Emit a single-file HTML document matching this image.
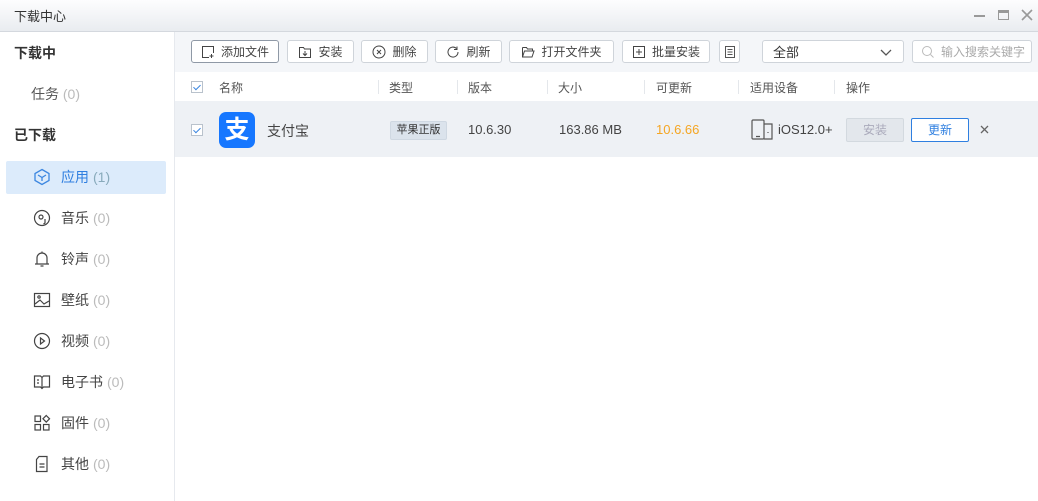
<!DOCTYPE html>
<html><head><meta charset="utf-8"><style>
*{margin:0;padding:0;box-sizing:border-box}
body{width:1038px;height:501px;overflow:hidden;background:#fff;font-family:"Liberation Sans","Noto Sans CJK SC",sans-serif;font-size:13px;color:#333;position:relative}
.abs{position:absolute}
.title{left:0;top:0;width:1038px;height:32px;background:linear-gradient(#fdfdfe,#e9ecf0);border-bottom:1px solid #d4d8de}
.side{left:0;top:32px;width:175px;height:469px;border-right:1px solid #e6e9ee;background:#fff}
.tb{left:175px;top:32px;width:863px;height:40px;background:#f4f6f9}
.btn{position:absolute;top:40px;height:23px;border:1px solid #cfd4da;border-radius:3px;background:#fff;font-size:12px;color:#444;display:flex;align-items:center;justify-content:center;gap:6px}
.btn svg{width:14px;height:14px}
.hdr{left:175px;top:72px;width:863px;height:29px;background:#fff;font-size:12px;color:#555}
.row{left:175px;top:101px;width:863px;height:56px;background:#eef1f5}
.sep{position:absolute;top:80px;width:1px;height:14px;background:#e4e7eb}
.cb{position:absolute;width:12px;height:12px;border:1px solid #b9c2cc;background:#fff}
.cb:after{content:"";position:absolute;left:3px;top:1px;width:3px;height:6px;border:solid #3b86e0;border-width:0 1.5px 1.5px 0;transform:rotate(45deg)}
.it{position:absolute;left:33px;font-size:14px;color:#444;display:flex;align-items:center;gap:10px}
.it span{color:#bbb}
.it svg{width:18px;height:18px}
</style></head><body>
<div class="abs title"></div>
<div class="abs" style="left:14px;top:6px;font-size:13px;color:#333">下载中心</div>
<div class="abs" style="left:974px;top:15px;width:11px;height:2px;background:#999"></div>
<div class="abs" style="left:998px;top:10px;width:11px;height:10px;border:1.5px solid #999;border-top-width:3px"></div>
<svg class="abs" style="left:1021px;top:9px" width="12" height="12" viewBox="0 0 12 12" stroke="#999" stroke-width="1.6"><path d="M1 1l10 10M11 1L1 11"/></svg>

<div class="abs side"></div>
<div class="abs" style="left:14px;top:43px;font-size:14px;font-weight:bold;color:#333">下载中</div>
<div class="abs" style="left:31px;top:84px;font-size:14px;color:#555">任务 <span style="color:#bbb">(0)</span></div>
<div class="abs" style="left:14px;top:125px;font-size:14px;font-weight:bold;color:#333">已下载</div>
<div class="abs" style="left:6px;top:161px;width:160px;height:33px;background:#dcebfb;border-radius:2px"></div>
<div class="it" style="top:167px;color:#2f7fe0"><svg viewBox="0 0 18 18" fill="none" stroke="#3b86e0" stroke-width="1.3"><path d="M9 1.5L16 5.5V12.5L9 16.5L2 12.5V5.5Z M5 7L9 9.5L13 7 M9 9.5V13"/></svg>应用 <span style="color:#8ab;margin-left:-6px">(1)</span></div>
<div class="it" style="top:208px"><svg viewBox="0 0 18 18" fill="none" stroke="#444" stroke-width="1.2"><circle cx="9" cy="9" r="7.5"/><circle cx="8" cy="8" r="2"/><path d="M12 10v4l-1.5 1"/></svg>音乐 <span style="margin-left:-6px">(0)</span></div>
<div class="it" style="top:249px"><svg viewBox="0 0 18 18" fill="none" stroke="#444" stroke-width="1.2"><path d="M4 14V8a5 5 0 0 1 10 0v6 M2 14h14 M7.5 16h3 M9 1.5v1.5"/></svg>铃声 <span style="margin-left:-6px">(0)</span></div>
<div class="it" style="top:290px"><svg viewBox="0 0 18 18" fill="none" stroke="#444" stroke-width="1.2"><rect x="1.5" y="2.5" width="15" height="13"/><circle cx="6" cy="6" r="1.2"/><path d="M2 13l5-4 4 4 5-3"/></svg>壁纸 <span style="margin-left:-6px">(0)</span></div>
<div class="it" style="top:331px"><svg viewBox="0 0 18 18" fill="none" stroke="#444" stroke-width="1.2"><circle cx="9" cy="9" r="7.5"/><path d="M7.5 6v6l4-3z"/></svg>视频 <span style="margin-left:-6px">(0)</span></div>
<div class="it" style="top:372px"><svg viewBox="0 0 18 18" fill="none" stroke="#444" stroke-width="1.2"><path d="M1.5 3h6l1.5 1.5L10.5 3h6v11h-6L9 15.5 7.5 14h-6z M9 4.5v11 M4 7h2 M4 10h2"/></svg>电子书 <span style="margin-left:-6px">(0)</span></div>
<div class="it" style="top:413px"><svg viewBox="0 0 18 18" fill="none" stroke="#444" stroke-width="1.2"><rect x="2" y="2" width="5.5" height="5.5"/><rect x="2" y="10.5" width="5.5" height="5.5"/><rect x="10.5" y="10.5" width="5.5" height="5.5"/><path d="M13.25 1.5l3.3 3.3-3.3 3.3-3.3-3.3z"/></svg>固件 <span style="margin-left:-6px">(0)</span></div>
<div class="it" style="top:454px"><svg viewBox="0 0 18 18" fill="none" stroke="#444" stroke-width="1.2"><path d="M6 1.5h8v15H3.5V4.5z M6.5 9h5 M6.5 12h5"/></svg>其他 <span style="margin-left:-6px">(0)</span></div>

<div class="abs tb"></div>
<div class="btn" style="left:191px;width:88px;border-color:#8f99a6"><svg viewBox="0 0 14 14" fill="none" stroke="#444"><path d="M8 12.5H1.5v-11h11V8 M10.5 9v4 M8.5 11h4"/></svg>添加文件</div>
<div class="btn" style="left:287px;width:67px"><svg viewBox="0 0 14 14" fill="none" stroke="#444"><path d="M1.5 2.5h4l1 1.5h6v8.5h-11z M7 6v4.5 M5 8.5l2 2 2-2"/></svg>安装</div>
<div class="btn" style="left:361px;width:67px"><svg viewBox="0 0 14 14" fill="none" stroke="#444"><circle cx="7" cy="7" r="6"/><path d="M5 5l4 4M9 5l-4 4"/></svg>删除</div>
<div class="btn" style="left:435px;width:67px"><svg viewBox="0 0 14 14" fill="none" stroke="#444"><path d="M12 7a5 5 0 1 1-1.5-3.5 M11 1.5v3h-3"/></svg>刷新</div>
<div class="btn" style="left:509px;width:105px"><svg viewBox="0 0 14 14" fill="none" stroke="#444"><path d="M1.5 2.5h4l1 1.5h5v2 M1.5 2.5v9.5h9.5l2-6h-9.5l-2 6"/></svg>打开文件夹</div>
<div class="btn" style="left:622px;width:88px"><svg viewBox="0 0 14 14" fill="none" stroke="#444"><rect x="1.5" y="1.5" width="11" height="11"/><path d="M7 4v6M4 7h6"/></svg>批量安装</div>
<div class="btn" style="left:719px;width:21px"><svg viewBox="0 0 14 14" fill="none" stroke="#555"><rect x="2.5" y="1.5" width="9" height="11"/><path d="M4.5 4.5h5M4.5 7h5M4.5 9.5h5"/></svg></div>
<div class="btn" style="left:762px;width:142px;justify-content:space-between;padding:0 10px;font-size:13px;color:#333">全部<svg viewBox="0 0 14 14" fill="none" stroke="#555" stroke-width="1.3"><path d="M2 5l5 5 5-5"/></svg></div>
<div class="btn" style="left:912px;width:120px;justify-content:flex-start;padding-left:8px;color:#aaa;font-size:12px"><svg viewBox="0 0 14 14" fill="none" stroke="#bbb"><circle cx="6" cy="6" r="4.5"/><path d="M9.5 9.5l3 3"/></svg>输入搜索关键字</div>

<div class="abs hdr"></div>
<div class="cb" style="left:191px;top:81px"></div>
<div class="abs" style="left:219px;top:79px;font-size:12px;color:#555">名称</div>
<div class="sep" style="left:378px"></div><div class="abs" style="left:389px;top:79px;font-size:12px;color:#555">类型</div>
<div class="sep" style="left:457px"></div><div class="abs" style="left:468px;top:79px;font-size:12px;color:#555">版本</div>
<div class="sep" style="left:547px"></div><div class="abs" style="left:558px;top:79px;font-size:12px;color:#555">大小</div>
<div class="sep" style="left:644px"></div><div class="abs" style="left:656px;top:79px;font-size:12px;color:#555">可更新</div>
<div class="sep" style="left:738px"></div><div class="abs" style="left:750px;top:79px;font-size:12px;color:#555">适用设备</div>
<div class="sep" style="left:834px"></div><div class="abs" style="left:846px;top:79px;font-size:12px;color:#555">操作</div>

<div class="abs row"></div>
<div class="cb" style="left:191px;top:124px"></div>
<div class="abs" style="left:219px;top:112px;width:36px;height:36px;background:#1677ff;border-radius:7px;color:#fff;font-size:25px;font-weight:bold;text-align:center;line-height:36px">支</div>
<div class="abs" style="left:267px;top:121px;font-size:14px;color:#444">支付宝</div>
<div class="abs" style="left:390px;top:121px;width:57px;height:19px;background:#dbe3ec;border:1px solid #cfd8e2;border-radius:2px;font-size:11px;color:#333;text-align:center;line-height:17px">苹果正版</div>
<div class="abs" style="left:468px;top:122px;font-size:13px;color:#444">10.6.30</div>
<div class="abs" style="left:559px;top:122px;font-size:13px;color:#444">163.86 MB</div>
<div class="abs" style="left:656px;top:122px;font-size:13px;color:#f5a623">10.6.66</div>
<svg class="abs" style="left:751px;top:119px" width="22" height="21" viewBox="0 0 22 21" fill="none" stroke="#555" stroke-width="1.2"><rect x="1" y="1" width="12" height="19" rx="1"/><path d="M13 5h8v15h-8 M5 17.5h4 M17 13v1"/></svg>
<div class="abs" style="left:778px;top:122px;font-size:13px;color:#444">iOS12.0+</div>
<div class="abs" style="left:846px;top:118px;width:58px;height:24px;background:#e3e7ec;border:1px solid #d3d9df;border-radius:2px;color:#aab;font-size:12px;text-align:center;line-height:22px">安装</div>
<div class="abs" style="left:911px;top:118px;width:58px;height:24px;background:#fff;border:1px solid #2f7fe0;border-radius:2px;color:#2f7fe0;font-size:12px;text-align:center;line-height:22px">更新</div>
<svg class="abs" style="left:980px;top:125px" width="9" height="9" viewBox="0 0 9 9" stroke="#666" stroke-width="1.3"><path d="M1 1l7 7M8 1L1 8"/></svg>
</body></html>
